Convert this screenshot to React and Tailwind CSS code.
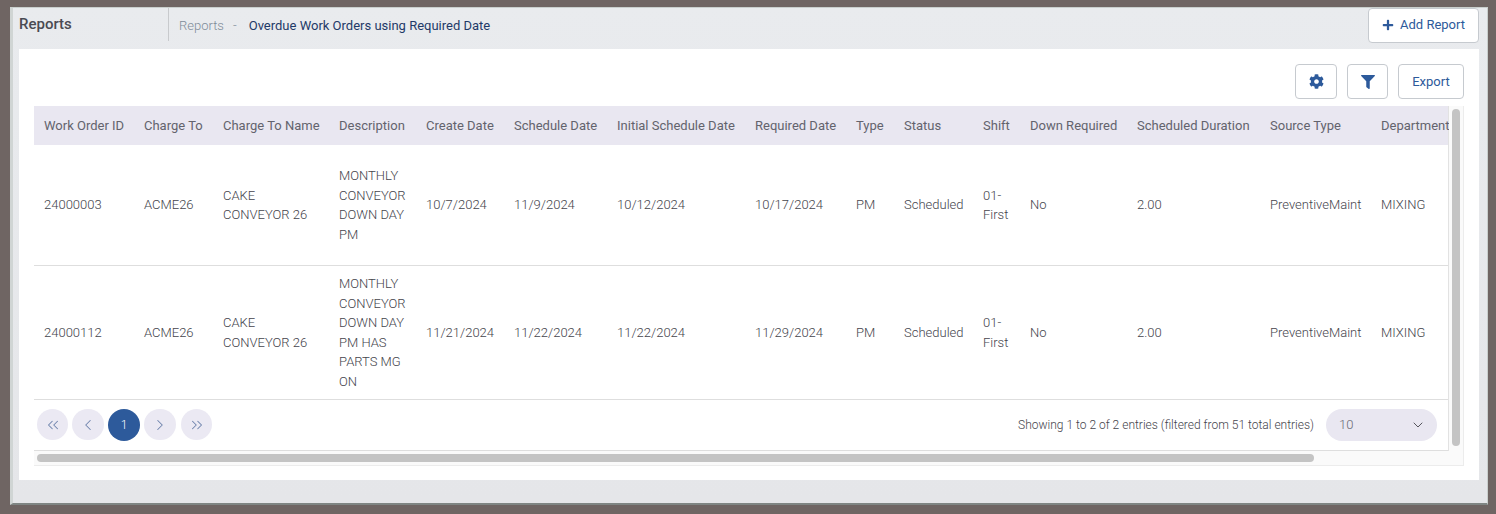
import { ChevronsLeft, ChevronLeft, ChevronRight, ChevronsRight, ChevronDown } from 'lucide-react';
import { FaCog, FaFilter, FaPlus } from 'react-icons/fa';

const columns = [
  { label: 'Work Order ID', width: 'w-[100px]' },
  { label: 'Charge To', width: 'w-[79px]' },
  { label: 'Charge To Name', width: 'w-[116px]' },
  { label: 'Description', width: 'w-[87px]' },
  { label: 'Create Date', width: 'w-[88px]' },
  { label: 'Schedule Date', width: 'w-[103px]' },
  { label: 'Initial Schedule Date', width: 'w-[138px]' },
  { label: 'Required Date', width: 'w-[101px]' },
  { label: 'Type', width: 'w-[48px]' },
  { label: 'Status', width: 'w-[79px]' },
  { label: 'Shift', width: 'w-[47px]' },
  { label: 'Down Required', width: 'w-[107px]' },
  { label: 'Scheduled Duration', width: 'w-[133px]' },
  { label: 'Source Type', width: 'w-[111px]' },
  { label: 'Department', width: 'w-[78px]' },
];

const rows = [
  {
    height: 'h-[121px]',
    cells: ['24000003', 'ACME26', 'CAKE CONVEYOR 26', 'MONTHLY CONVEYOR DOWN DAY PM', '10/7/2024', '11/9/2024', '10/12/2024', '10/17/2024', 'PM', 'Scheduled', '01-First', 'No', '2.00', 'PreventiveMaint', 'MIXING'],
  },
  {
    height: 'h-[134px]',
    cells: ['24000112', 'ACME26', 'CAKE CONVEYOR 26', 'MONTHLY CONVEYOR DOWN DAY PM HAS PARTS MG ON', '11/21/2024', '11/22/2024', '11/22/2024', '11/29/2024', 'PM', 'Scheduled', '01-First', 'No', '2.00', 'PreventiveMaint', 'MIXING'],
  },
];

const PageButton = ({ children, width }) => (
  <button className={`flex h-[31px] ${width} items-center justify-center rounded-full bg-[#ebe9f3] text-[#6f84ad]`}>
    {children}
  </button>
);

const App = () => {
  return (
    <div className="h-[514px] w-[1496px] overflow-hidden bg-[#6f6563] pl-[10px] pr-[8px] pt-[7px] font-['Roboto',sans-serif] text-[13px] text-[#63636d]">
      <div className="h-[498px] w-[1478px] border-b-2 border-l-[3px] border-r-[1px] border-t border-b-[#7f8583] border-l-[#d0d5d4] border-r-[#c9cfcd] border-t-[#c9cfcd] bg-gradient-to-b from-[#e9ebee] to-[#e5e6e9] pl-[6px] pr-[8px]">
        <div className="flex h-[41px] items-start">
          <div className="w-[149px] pt-[6px] text-[15px] font-medium leading-[20px] text-[#4a4a52]">Reports</div>
          <div className="flex h-[33px] flex-1 items-center border-l border-[#c8cacd] pl-[10px] pt-[3px]">
            <span className="font-light text-[#7f8b99]">Reports</span>
            <span className="ml-[9px] font-light text-[#7f8b99]">-</span>
            <span className="ml-[12px] text-[#1f3a68]">Overdue Work Orders using Required Date</span>
          </div>
          <button className="flex h-[35px] w-[111px] items-center justify-center gap-[6px] rounded-[4px] border border-[#c6cacf] bg-white pb-[1px] text-[#2d5a9b]">
            <FaPlus size={12} />
            <span>Add Report</span>
          </button>
        </div>

        <div className="h-[431px] bg-white pl-[15px] pr-[15px] pt-[15px]">
          <div className="flex h-[42px] justify-end gap-[10px]">
            <button className="flex h-[35px] w-[42px] items-center justify-center rounded-[4px] border border-[#c6cacf] text-[#2d5a9b]">
              <FaCog size={15} />
            </button>
            <button className="flex h-[35px] w-[41px] items-center justify-center rounded-[4px] border border-[#c6cacf] text-[#2d5a9b]">
              <FaFilter size={14} />
            </button>
            <button className="flex h-[35px] w-[66px] items-center justify-center rounded-[4px] border border-[#c6cacf] text-[#2d5a9b]">Export</button>
          </div>

          <div className="w-[1430px] border-b border-r border-[#ececec]">
            <div className="flex">
              <div className="w-[1415px] border-r border-[#e2e2e2]">
                <div className="flex h-[39px] items-center bg-[#e9e7f1]">
                  {columns.map((col) => (
                    <div key={col.label} className={`${col.width} shrink-0 whitespace-nowrap pl-[10px]`}>{col.label}</div>
                  ))}
                </div>
                {rows.map((row) => (
                  <div key={row.cells[0]} className={`${row.height} flex items-center border-b border-[#dedede]`}>
                    {row.cells.map((cell, i) => (
                      <div key={i} className={`${columns[i].width} shrink-0 px-[10px] font-light leading-[19.5px] text-[#44444c]`}>{cell}</div>
                    ))}
                  </div>
                ))}
                <div className="flex h-[51px] items-center justify-between border-b border-[#dedede] pb-[1px] pl-[3px] pr-[11px]">
                  <div className="flex items-center gap-[4px]">
                    <PageButton width="w-[31px]"><ChevronsLeft size={18} strokeWidth={1.4} /></PageButton>
                    <PageButton width="w-[32px]"><ChevronLeft size={18} strokeWidth={1.4} /></PageButton>
                    <button className="flex h-[32px] w-[32px] items-center justify-center rounded-full bg-[#2d5a9b] text-[12px] font-light text-white">1</button>
                    <PageButton width="w-[32px]"><ChevronRight size={18} strokeWidth={1.4} /></PageButton>
                    <PageButton width="w-[31px] ml-[1px]"><ChevronsRight size={18} strokeWidth={1.4} /></PageButton>
                  </div>
                  <div className="flex items-center gap-[12px]">
                    <span className="text-[12px] font-light text-[#44444c]">Showing 1 to 2 of 2 entries (filtered from 51 total entries)</span>
                    <div className="flex h-[32px] w-[111px] items-center justify-between rounded-full bg-[#e9e7f1] pl-[13px] pr-[11px] font-light text-[#6a6a73]">
                      <span>10</span>
                      <ChevronDown size={16} strokeWidth={1.4} className="text-[#4a4a52]" />
                    </div>
                  </div>
                </div>
              </div>
              <div className="flex w-[14px] justify-center bg-[#fafafa] pt-[3px]">
                <div className="h-[337px] w-[8px] rounded-full bg-[#c4c4c4]"></div>
              </div>
            </div>
            <div className="h-[14px] bg-[#fafafa] pl-[3px] pt-[3px]">
              <div className="h-[8px] w-[1277px] rounded-full bg-[#c4c4c4]"></div>
            </div>
          </div>
        </div>
      </div>
    </div>
  );
};

export default App;
